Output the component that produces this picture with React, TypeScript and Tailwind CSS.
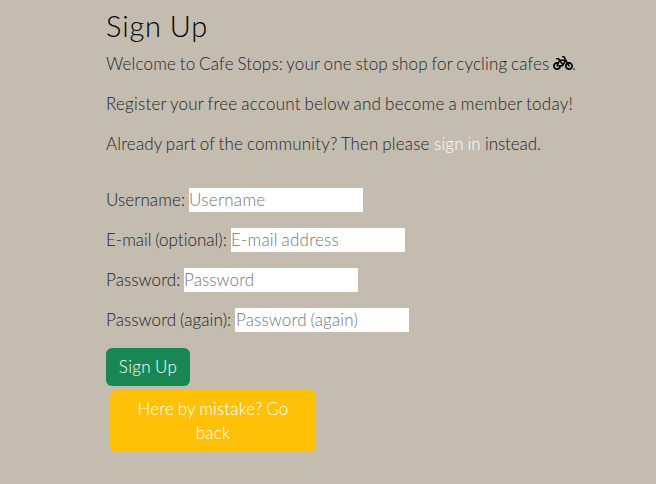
import { FaBicycle } from "react-icons/fa6";

type FieldProps = { label: string; labelClass: string; placeholder: string; inputClass: string; type: string };

function Field({ label, labelClass, placeholder, inputClass, type }: FieldProps) {
  return (
    <label className="flex h-6 whitespace-nowrap">
      <span className={`shrink-0 ${labelClass}`}>{label}</span>
      <input
        type={type}
        placeholder={placeholder}
        className={`h-6 w-[174px] shrink-0 bg-white outline-none [word-spacing:-1px] placeholder:text-[#757575] ${inputClass}`}
      />
    </label>
  );
}

export default function App() {
  return (
    <main className="h-[484px] w-[656px] overflow-hidden bg-[#c4bcae] pl-[106px] pt-[9px] font-['Lato',sans-serif] text-[17px] font-light leading-6 text-[#212529] [font-variant-ligatures:none] [word-spacing:-1px]">
      <h1 className="mb-[9px] h-[34px] whitespace-nowrap text-[29px] leading-[34px] tracking-[0.85px] text-black">Sign Up</h1>
      <div className="flex flex-col gap-4 whitespace-nowrap">
        <p className="flex h-6">
          <span className="w-[447px] tracking-[0.15px]">Welcome to Cafe Stops: your one stop shop for cycling cafes</span>
          <FaBicycle className="mt-[3px] h-4 w-5 text-black" />
          <span className="-ml-px">.</span>
        </p>
        <p className="h-6 tracking-[0.23px]">Register your free account below and become a member today!</p>
        <p className="flex h-6">
          <span className="w-[328px] tracking-[0.16px]">Already part of the community? Then please</span>
          <a href="#signin" className="w-[51px] tracking-[0.15px] text-white">sign in</a>
          <span className="tracking-[-0.1px]">instead.</span>
        </p>
      </div>
      <form className="mt-8">
        <div className="flex flex-col gap-4">
          <Field label="Username:" labelClass="w-[83px] tracking-[0.1px]" placeholder="Username" inputClass="tracking-[0.3px]" type="text" />
          <Field label="E-mail (optional):" labelClass="w-[125px]" placeholder="E-mail address" inputClass="tracking-[0.2px]" type="email" />
          <Field label="Password:" labelClass="w-[78px] tracking-[0.1px]" placeholder="Password" inputClass="tracking-[0.1px]" type="password" />
          <Field label="Password (again):" labelClass="w-[129px] tracking-[0.1px]" placeholder="Password (again)" inputClass="pl-px tracking-[0.15px]" type="password" />
        </div>
        <button type="submit" className="mt-4 block h-[38px] w-[84px] whitespace-nowrap rounded-md bg-[#198754] text-center tracking-[0.35px] text-white [word-spacing:-1px]">
          Sign Up
        </button>
        <a href="#home" className="ml-1 mt-1 block h-[62px] w-[206px] rounded-md bg-[#ffc107] pt-[7px] text-center tracking-[0.15px] text-white">
          Here by mistake? Go
          <br />
          back
        </a>
      </form>
    </main>
  );
}
